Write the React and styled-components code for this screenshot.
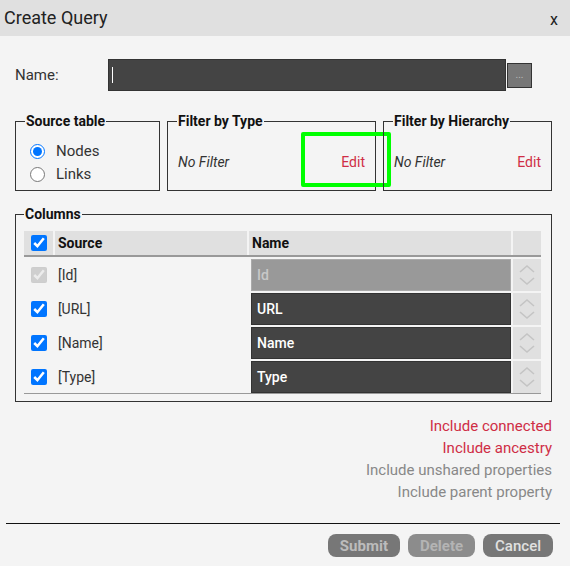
import styled, { createGlobalStyle } from "styled-components";

const GlobalStyle = createGlobalStyle`
  html, body {
    margin: 0;
    padding: 0;
    background: #f4f4f4;
    font-family: Roboto, "Liberation Sans", sans-serif;
  }
  * { box-sizing: border-box; }
`;

const rows = [
  { source: "[Id]", name: "Id", locked: true },
  { source: "[URL]", name: "URL" },
  { source: "[Name]", name: "Name" },
  { source: "[Type]", name: "Type" },
];

const options = [
  { label: "Include connected", active: true },
  { label: "Include ancestry", active: true },
  { label: "Include unshared properties" },
  { label: "Include parent property" },
];

function App() {
  return (
    <>
      <GlobalStyle />
      <Dialog>
        <TitleBar>
          <Title>Create Query</Title>
          <Close>x</Close>
        </TitleBar>
        <Body>
          <NameRow>
            <Label>Name:</Label>
            <NameInput>
              <Caret />
            </NameInput>
            <DotsButton>...</DotsButton>
          </NameRow>

          <Filters>
            <Group $w={145}>
              <Legend>Source table</Legend>
              <RadioList>
                <RadioLabel>
                  <input type="radio" name="src" defaultChecked />
                  Nodes
                </RadioLabel>
                <RadioLabel>
                  <input type="radio" name="src" />
                  Links
                </RadioLabel>
              </RadioList>
            </Group>
            <Group $w={209}>
              <Legend>Filter by Type</Legend>
              <FilterLine>
                <NoFilter>No Filter</NoFilter>
                <EditLink>Edit</EditLink>
              </FilterLine>
              <Highlight />
            </Group>
            <Group $w={169}>
              <Legend>Filter by Hierarchy</Legend>
              <FilterLine>
                <NoFilter>No Filter</NoFilter>
                <EditLink>Edit</EditLink>
              </FilterLine>
            </Group>
          </Filters>

          <ColumnsGroup>
            <Legend>Columns</Legend>
            <Table>
              <HeadRow>
                <HeadCell>
                  <Check type="checkbox" defaultChecked />
                </HeadCell>
                <HeadCell>Source</HeadCell>
                <HeadCell>Name</HeadCell>
                <HeadCell />
              </HeadRow>
              {rows.map((r) => (
                <Row key={r.source}>
                  <CheckCell>
                    <Check type="checkbox" defaultChecked disabled={r.locked} />
                  </CheckCell>
                  <SourceCell>{r.source}</SourceCell>
                  <NameCell $locked={r.locked}>{r.name}</NameCell>
                  <OrderCell>
                    <svg width="18" height="26" viewBox="0 0 18 26" fill="none" stroke="#c4c4c4" strokeWidth="1.6">
                      <path d="M2 10 L9 4 L16 10" />
                      <path d="M2 16 L9 22 L16 16" />
                    </svg>
                  </OrderCell>
                </Row>
              ))}
            </Table>
          </ColumnsGroup>

          <Options>
            {options.map((o) => (
              <Option key={o.label} $active={o.active}>
                {o.label}
              </Option>
            ))}
          </Options>

          <Divider />

          <Buttons>
            <Button>Submit</Button>
            <Button $muted>Delete</Button>
            <Button $light>Cancel</Button>
          </Buttons>
        </Body>
      </Dialog>
    </>
  );
}

const Dialog = styled.div`
  width: 570px;
  height: 566px;
  background: #f4f4f4;
  color: #333;
`;

const TitleBar = styled.div`
  height: 36px;
  background: #e0e0e0;
  display: flex;
  align-items: center;
  justify-content: space-between;
  padding: 0 12px 0 4px;
`;

const Title = styled.div`
  font-size: 18px;
  color: #222;
  margin-top: -2px;
`;

const Close = styled.div`
  font-size: 16px;
  color: #222;
  margin-top: 3px;
`;

const Body = styled.div`
  padding: 23px 0 0 15px;
`;

const NameRow = styled.div`
  display: flex;
  align-items: center;
  height: 32px;
`;

const Label = styled.div`
  width: 93px;
  font-size: 15px;
  color: #333;
`;

const NameInput = styled.div`
  width: 398px;
  height: 32px;
  background: #444;
  border: 1px solid #333;
  display: flex;
  align-items: center;
  padding-left: 3px;
`;

const Caret = styled.span`
  width: 1px;
  height: 16px;
  background: #fff;
`;

const DotsButton = styled.div`
  width: 25px;
  height: 25px;
  margin-left: 1px;
  background: #777;
  border: 1px solid #333;
  color: #bbb;
  font-size: 10px;
  display: flex;
  align-items: center;
  justify-content: center;
  line-height: 1;
`;

const Filters = styled.div`
  display: flex;
  gap: 7px;
  margin-top: 22px;
`;

const Group = styled.fieldset`
  position: relative;
  width: ${(p) => p.$w}px;
  height: 78px;
  margin: 0;
  padding: 0 6px 0 9px;
  border: 1px solid #333;
  min-width: 0;
`;

const Legend = styled.legend`
  font-size: 14px;
  font-weight: 700;
  color: #111;
  padding: 0 1px;
  line-height: 16px;
`;

const RadioList = styled.div`
  display: flex;
  flex-direction: column;
  gap: 3px;
  padding: 12px 0 0 5px;
`;

const RadioLabel = styled.label`
  display: flex;
  align-items: center;
  gap: 11px;
  font-size: 15px;
  color: #333;
  height: 20px;

  input {
    margin: 0;
    width: 15px;
    height: 15px;
    accent-color: #0075ff;
  }
`;

const FilterLine = styled.div`
  display: flex;
  justify-content: space-between;
  align-items: center;
  padding: 25px 4px 0 1px;
  font-size: 14px;
`;

const NoFilter = styled.span`
  font-style: italic;
  color: #333;
`;

const EditLink = styled.span`
  color: #cf2d45;
  cursor: pointer;
`;

const Highlight = styled.div`
  position: absolute;
  left: 133px;
  top: 3px;
  width: 90px;
  height: 55px;
  border: 4px solid #00ff00;
  border-radius: 2px;
  pointer-events: none;
`;

const ColumnsGroup = styled.fieldset`
  width: 537px;
  margin: 15px 0 0;
  padding: 9px 9px 7px 8px;
  border: 1px solid #333;
  min-width: 0;
`;

const Table = styled.div`
  border-bottom: 1px solid #999;
  width: 517px;
`;

const grid = `
  display: grid;
  grid-template-columns: 29px 192px 262px 28px;
  column-gap: 2px;
`;

const HeadRow = styled.div`
  ${grid}
  height: 26px;
  border-bottom: 2px solid #999;
`;

const HeadCell = styled.div`
  background: #e0e0e0;
  display: flex;
  align-items: center;
  padding-left: 3px;
  font-size: 14px;
  font-weight: 700;
  color: #111;

  &:first-child {
    justify-content: center;
    padding-left: 0;
  }
`;

const Row = styled.div`
  ${grid}
  height: 34px;
  padding: 2px 0 0;
`;

const Check = styled.input`
  margin: 0;
  width: 16px;
  height: 16px;
  accent-color: #0075ff;
`;

const CheckCell = styled.div`
  display: flex;
  align-items: center;
  justify-content: center;
`;

const SourceCell = styled.div`
  display: flex;
  align-items: center;
  padding-left: 3px;
  font-size: 14px;
  color: #333;
`;

const NameCell = styled.div`
  display: flex;
  align-items: center;
  padding-left: 5px;
  margin-left: 2px;
  font-size: 14px;
  font-weight: 500;
  background: ${(p) => (p.$locked ? "#999" : "#444")};
  color: ${(p) => (p.$locked ? "#c8c8c8" : "#fff")};
  border: 1px solid ${(p) => (p.$locked ? "#aaa" : "#333")};
`;

const OrderCell = styled.div`
  background: #e0e0e0;
  display: flex;
  align-items: center;
  justify-content: center;
`;

const Options = styled.div`
  display: flex;
  flex-direction: column;
  align-items: flex-end;
  width: 537px;
  margin-top: 13px;
`;

const Option = styled.div`
  font-size: 15px;
  line-height: 22px;
  color: ${(p) => (p.$active ? "#cf2d45" : "#888")};
`;

const Divider = styled.div`
  height: 1px;
  background: #111;
  width: 554px;
  margin: 20px 0 0 -9px;
`;

const Buttons = styled.div`
  display: flex;
  justify-content: flex-end;
  gap: 8px;
  width: 538px;
  margin-top: 10px;
`;

const Button = styled.div`
  height: 23px;
  padding: 0 12px;
  border-radius: 8px;
  display: flex;
  align-items: center;
  font-size: 15px;
  font-weight: 700;
  background: ${(p) => (p.$muted ? "#8c8c8c" : "#777")};
  color: ${(p) => (p.$muted ? "#b4b4b4" : p.$light ? "#e0e0e0" : "#bcbcbc")};
  ${(p) => p.$light && "font-weight: 500;"}
`;

export default App;
